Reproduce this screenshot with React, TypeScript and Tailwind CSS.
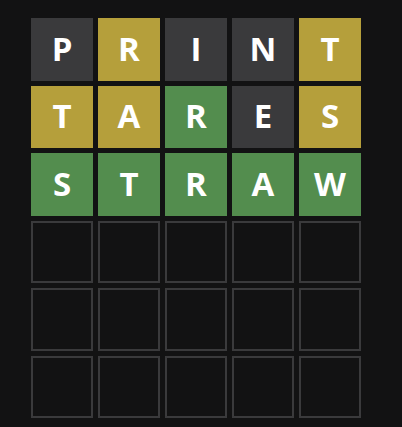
import React from "react";

type S = "g" | "y" | "d" | "e";
const rows: { l: string; s: S }[][] = [
  [
    { l: "P", s: "d" },
    { l: "R", s: "y" },
    { l: "I", s: "d" },
    { l: "N", s: "d" },
    { l: "T", s: "y" },
  ],
  [
    { l: "T", s: "y" },
    { l: "A", s: "y" },
    { l: "R", s: "g" },
    { l: "E", s: "d" },
    { l: "S", s: "y" },
  ],
  [
    { l: "S", s: "g" },
    { l: "T", s: "g" },
    { l: "R", s: "g" },
    { l: "A", s: "g" },
    { l: "W", s: "g" },
  ],
];

const cls: Record<S, string> = {
  g: "bg-[#538d4e]",
  y: "bg-[#b59f3b]",
  d: "bg-[#3a3a3c]",
  e: "border-2 border-[#3a3a3c]",
};

export default function App() {
  const all = [...rows];
  while (all.length < 6) all.push(Array.from({ length: 5 }, () => ({ l: "", s: "e" as S })));
  return (
    <div className="w-[402px] h-[427px] bg-[#121213] pt-[18px] pl-[31px]">
      <div
        className="grid grid-cols-5 grid-rows-6 gap-[5px] w-[330px] h-[400px]"
        style={{ fontFamily: '"Open Sans", "Noto Sans", sans-serif' }}
      >
        {all.flat().map((t, i) => (
          <div
            key={i}
            className={`flex items-center justify-center text-white font-bold text-[33px] leading-none pb-[2px] ${cls[t.s]}`}
          >
            {t.l}
          </div>
        ))}
      </div>
    </div>
  );
}
